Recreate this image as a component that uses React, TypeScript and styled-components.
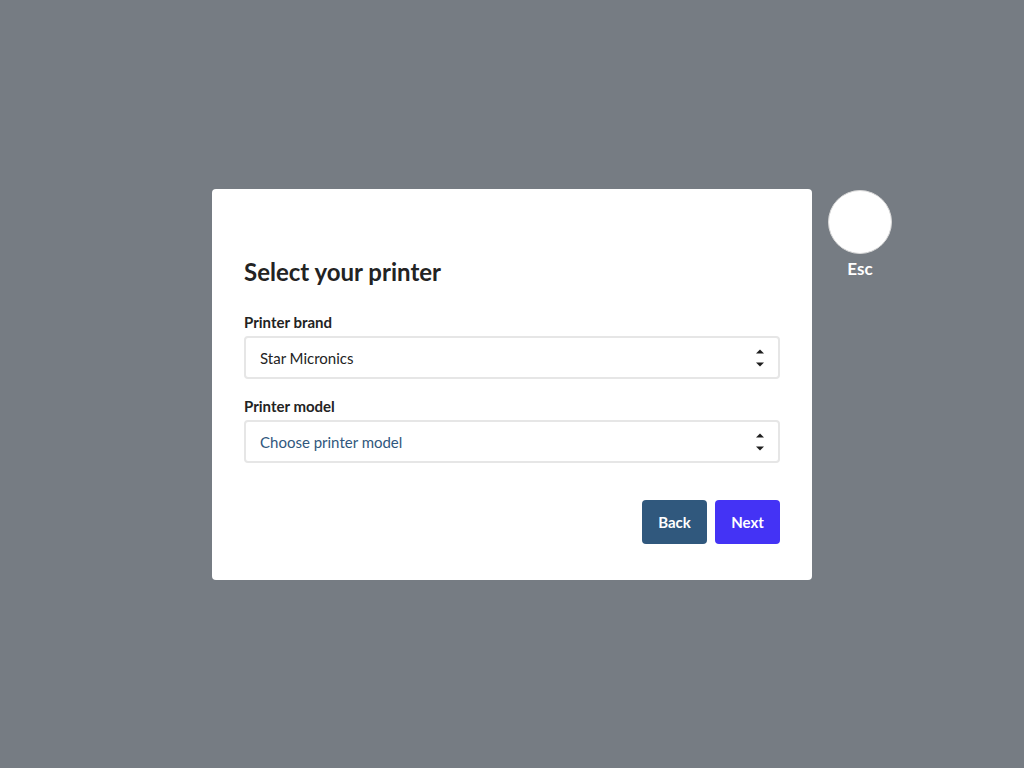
import React from "react";
import styled, { createGlobalStyle } from "styled-components";

const Global = createGlobalStyle`
  html, body { margin: 0; padding: 0; }
  body { font-family: Lato, "Open Sans", sans-serif; }
  * { box-sizing: border-box; }
`;

const Overlay = styled.div`
  width: 1024px;
  height: 768px;
  background: #767c83;
  display: flex;
  align-items: center;
  justify-content: center;
`;

const Modal = styled.div`
  position: relative;
  width: 600px;
  background: #ffffff;
  border-radius: 4px;
  padding: 68px 32px 36px 32px;
  display: flex;
  flex-direction: column;
`;

const Title = styled.h2`
  margin: 0 0 27px 0;
  font-size: 24px;
  line-height: 29px;
  font-weight: 700;
  color: #232323;
`;

const Field = styled.div`
  display: flex;
  flex-direction: column;
  margin-bottom: 18px;
`;

const Label = styled.label`
  font-size: 15px;
  font-weight: 700;
  line-height: 18px;
  color: #232323;
  margin-bottom: 5px;
`;

const SelectBox = styled.div<{ $placeholder?: boolean }>`
  height: 43px;
  border: 2px solid #e6e6e6;
  border-radius: 4px;
  display: flex;
  align-items: center;
  justify-content: space-between;
  padding: 1px 14px 0 14px;
  font-size: 15px;
  color: ${(p) => (p.$placeholder ? "#30577d" : "#232323")};
`;

const Actions = styled.div`
  display: flex;
  justify-content: flex-end;
  gap: 8px;
  margin-top: 19px;
`;

const Button = styled.button<{ $primary?: boolean }>`
  height: 44px;
  width: 65px;
  border: none;
  border-radius: 4px;
  font-family: Lato, sans-serif;
  font-size: 15px;
  font-weight: 700;
  color: #ffffff;
  background: ${(p) => (p.$primary ? "#4433f5" : "#30587d")};
  cursor: pointer;
`;

const EscWrap = styled.div`
  position: absolute;
  left: calc(100% + 16px);
  top: 1px;
  display: flex;
  flex-direction: column;
  align-items: center;
`;

const EscCircle = styled.div`
  width: 64px;
  height: 64px;
  border-radius: 50%;
  background: #ffffff;
  border: 1px solid #d8d8d8;
`;

const EscLabel = styled.span`
  margin-top: 4px;
  font-size: 17px;
  font-weight: 700;
  line-height: 21px;
  color: #ffffff;
`;

const Arrows = () => (
  <svg width="8" height="18" viewBox="0 0 8 18">
    <path d="M0 4.5 L4 0.5 L8 4.5 Z" fill="#1e1e1e" />
    <path d="M0 13.5 L8 13.5 L4 17.5 Z" fill="#1e1e1e" />
  </svg>
);

export default function App() {
  return (
    <>
      <Global />
      <Overlay>
        <Modal>
          <Title>Select your printer</Title>
          <Field>
            <Label>Printer brand</Label>
            <SelectBox>
              <span>Star Micronics</span>
              <Arrows />
            </SelectBox>
          </Field>
          <Field>
            <Label>Printer model</Label>
            <SelectBox $placeholder>
              <span>Choose printer model</span>
              <Arrows />
            </SelectBox>
          </Field>
          <Actions>
            <Button>Back</Button>
            <Button $primary>Next</Button>
          </Actions>
          <EscWrap>
            <EscCircle />
            <EscLabel>Esc</EscLabel>
          </EscWrap>
        </Modal>
      </Overlay>
    </>
  );
}
